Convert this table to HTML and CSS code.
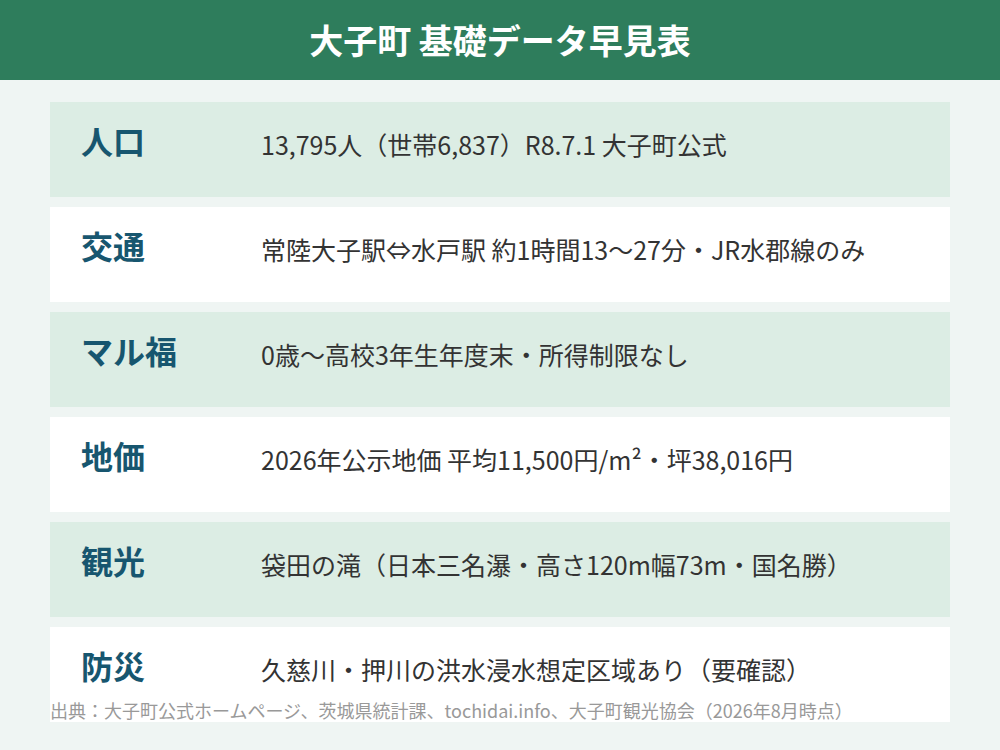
FILE: index.html
```html
<!DOCTYPE html>
<html lang="ja">
<head>
<meta charset="utf-8">
<title>大子町 基礎データ早見表</title>
<link rel="stylesheet" href="styles.css">
</head>
<body>
<header class="header"><h1 class="title">大子町 基礎データ早見表</h1></header>
<main class="list">
  <div class="row row-tint"><div class="label">人口</div><div class="value">13,795人（世帯6,837）R8.7.1 大子町公式</div></div>
  <div class="row"><div class="label">交通</div><div class="value">常陸大子駅⇔水戸駅 約1時間13〜27分・JR水郡線のみ</div></div>
  <div class="row row-tint"><div class="label">マル福</div><div class="value">0歳〜高校3年生年度末・所得制限なし</div></div>
  <div class="row"><div class="label">地価</div><div class="value">2026年公示地価 平均11,500円/m²・坪38,016円</div></div>
  <div class="row row-tint"><div class="label">観光</div><div class="value">袋田の滝（日本三名瀑・高さ120m幅73m・国名勝）</div></div>
  <div class="row"><div class="label">防災</div><div class="value">久慈川・押川の洪水浸水想定区域あり（要確認）</div></div>
</main>
<p class="source">出典：大子町公式ホームページ、茨城県統計課、tochidai.info、大子町観光協会（2026年8月時点）</p>
</body>
</html>
```

FILE: styles.css
```css
html, body {
  margin: 0;
  padding: 0;
}
body {
  width: 1000px;
  height: 750px;
  position: relative;
  overflow: hidden;
  background: #eff5f3;
  font-family: "Noto Sans CJK JP", "Noto Sans", sans-serif;
}
.header {
  height: 80px;
  background: #2e7d5c;
  display: flex;
  align-items: center;
  justify-content: center;
}
.title {
  margin: 0;
  color: #ffffff;
  font-size: 34px;
  font-weight: 700;
  line-height: 1;
}
.list {
  padding: 22px 50px 0;
  display: flex;
  flex-direction: column;
  gap: 10px;
}
.row {
  height: 95px;
  background: #ffffff;
  display: grid;
  grid-template-columns: 180px 1fr;
  align-items: start;
  padding-left: 31px;
  box-sizing: border-box;
}
.row-tint {
  background: #dcede4;
}
.label {
  margin-top: 22px;
  color: #17566f;
  font-size: 32px;
  font-weight: 700;
  line-height: 1;
}
.value {
  margin-top: 30px;
  color: #333333;
  font-size: 25px;
  line-height: 1;
}
.source {
  position: absolute;
  left: 50px;
  top: 700px;
  margin: 0;
  color: #999999;
  font-size: 18px;
  line-height: 20px;
}
```
